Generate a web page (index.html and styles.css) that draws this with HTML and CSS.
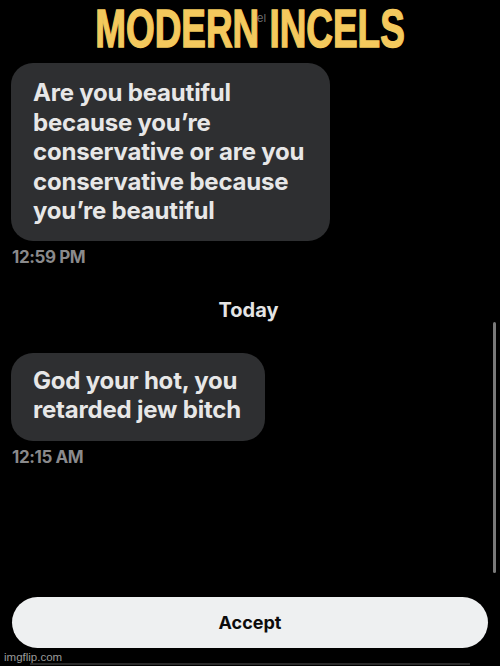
FILE: index.html
```html
<!DOCTYPE html>
<html>
<head>
<meta charset="utf-8">
<link rel="stylesheet" href="styles.css">
</head>
<body>
<div class="screen">
  <div class="header">
    <span class="ghost">el</span>
    <h1 class="title">MODERN INCELS</h1>
  </div>
  <div class="chat">
    <div class="bubble bubble-wide">Are you beautiful<br>because you’re<br>conservative or are you<br>conservative because<br>you’re beautiful</div>
    <div class="time">12:59 PM</div>
    <div class="day">Today</div>
    <div class="bubble bubble-short">God your hot, you<br>retarded jew bitch</div>
    <div class="time">12:15 AM</div>
  </div>
  <div class="footer">
    <button class="accept">Accept</button>
    <div class="underline"></div>
  </div>
  <div class="scrollbar"></div>
  <div class="watermark">imgflip.com</div>
</div>
</body>
</html>
```

FILE: styles.css
```css
* { box-sizing: border-box; }
html, body { margin: 0; padding: 0; background: #000; }
.screen {
  position: relative;
  width: 500px;
  height: 666px;
  overflow: hidden;
  background: #000;
  display: flex;
  flex-direction: column;
  font-family: Inter, "Liberation Sans", sans-serif;
}
.header {
  position: relative;
  height: 58px;
}
.title {
  margin: 0;
  padding-top: 2px;
  text-align: center;
  font-family: "Liberation Sans", sans-serif;
  font-weight: 700;
  font-size: 45px;
  line-height: 45px;
  color: #f4c95d;
  -webkit-text-stroke: 1.2px #f4c95d;
  transform: scale(0.82, 1.18);
  transform-origin: top center;
  letter-spacing: 0;
}
.ghost {
  position: absolute;
  left: 257px;
  top: 13px;
  font-family: Inter, sans-serif;
  font-size: 11px;
  line-height: 11px;
  font-weight: 400;
  color: #6f6f6f;
}
.chat {
  display: flex;
  flex-direction: column;
  align-items: flex-start;
  padding: 5px 12px 0 11px;
}
.bubble {
  background: #2e2f31;
  color: #e7e7e7;
  font-weight: 700;
  font-size: 24px;
  line-height: 29.5px;
  border-radius: 22px;
  padding: 15px 10px 15px 22px;
  letter-spacing: -0.2px;
  white-space: nowrap;
}
.bubble-wide { width: 319px; height: 178px; }
.bubble-short { width: 254px; height: 88px; padding-top: 14px; line-height: 28.5px; }
.time {
  margin-top: 6px;
  padding-left: 1px;
  color: #8a8a8c;
  font-weight: 700;
  font-size: 17px;
  line-height: 20px;
  letter-spacing: -0.4px;
}
.day {
  align-self: center;
  margin-top: 31px;
  color: #e4e4e4;
  font-weight: 700;
  font-size: 20px;
  line-height: 24px;
  width: 500px;
  text-align: center;
  transform: translateX(-1px);
}
.day + .bubble { margin-top: 31px; }
.footer {
  margin-top: auto;
  display: flex;
  flex-direction: column;
  align-items: center;
  padding-bottom: 1px;
}
.accept {
  width: 476px;
  height: 51px;
  border: none;
  border-radius: 26px;
  background: #eef0f1;
  color: #0c0c0c;
  font-family: Inter, "Liberation Sans", sans-serif;
  font-weight: 700;
  font-size: 18px;
}
.underline {
  margin-top: 15px;
  width: 440px;
  height: 2px;
  background: #2a2a2a;
}
.scrollbar {
  position: absolute;
  left: 493px;
  top: 322px;
  width: 3px;
  height: 251px;
  border-radius: 2px;
  background: #7a7a7a;
}
.watermark {
  position: absolute;
  left: 4px;
  top: 650px;
  font-family: "Liberation Sans", sans-serif;
  font-size: 11.5px;
  line-height: 14px;
  color: #9a9a9a;
}
```
